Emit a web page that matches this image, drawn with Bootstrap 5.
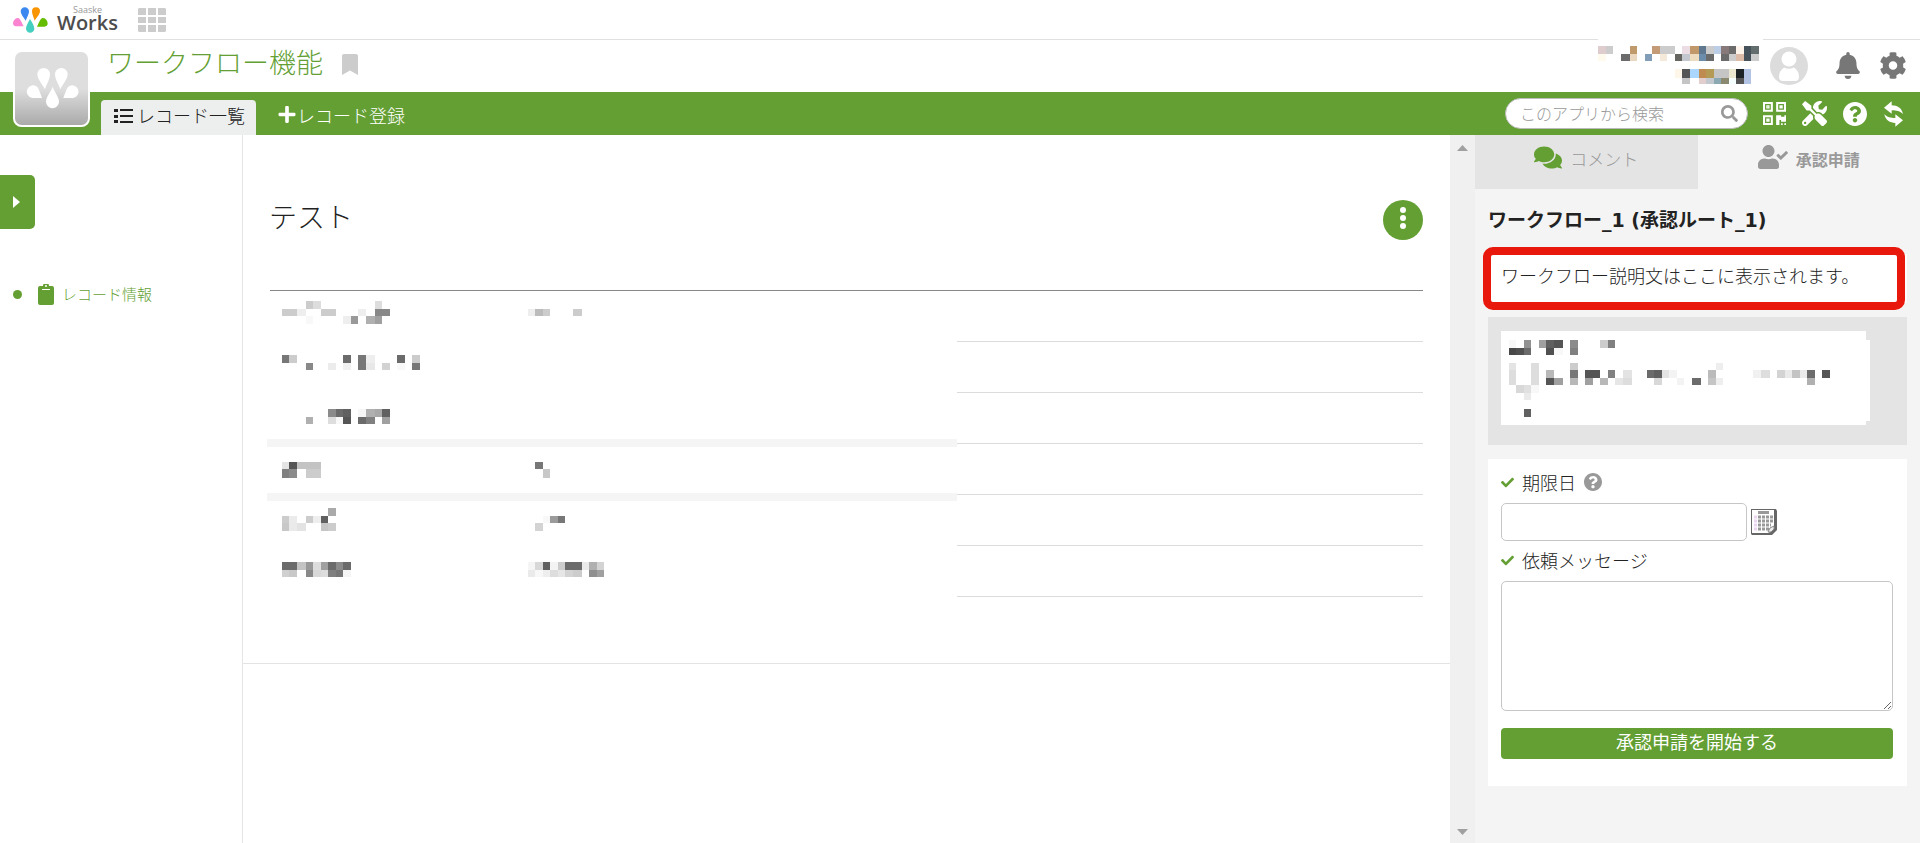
<!DOCTYPE html>
<html lang="ja">
<head>
<meta charset="utf-8">
<meta name="viewport" content="width=device-width, initial-scale=1">
<title>ワークフロー機能</title>
<link href="https://cdn.jsdelivr.net/npm/bootstrap@5.3.0/dist/css/bootstrap.min.css" rel="stylesheet">
<style>
:root { --leaf: #649f34; --ink: #222; }
body { font-family: "Noto Sans CJK JP", sans-serif; font-weight: 300; font-size: 18px; line-height: 24px; color: var(--ink); background: #fff; }
svg { display: block; fill: currentColor; flex: none; }
a { color: inherit; text-decoration: none; }
.topbar { height: 40px; border-bottom: 1px solid #e0e0e0; padding-left: 12px; }
.brand-name { font-family: "Open Sans", sans-serif; font-weight: 600; font-size: 20px; line-height: 20px; color: #4d4d4d; }
.brand-top { font-family: "Open Sans", sans-serif; font-weight: 400; font-size: 9px; line-height: 6px; color: #999; }
.apps-btn { color: #ccc; margin-left: 20px; }
.apphead { height: 52px; padding-left: 107px; padding-right: 14px; color: #777; }
.apphead h1 { font-size: 27px; font-weight: 300; line-height: 32px; color: var(--leaf); margin-top: 6px; }
.bookmark { color: #ccc; margin: 14px 0 0 19px; }
.app-icon { position: absolute; left: 13px; top: 10px; z-index: 2; }
.redacted-user { margin-top: -2px; z-index: 1; }
.user-tools { padding: 0 0 2px 5px; }
.greenbar { background: var(--leaf); height: 43px; padding-left: 101px; padding-right: 16px; color: #fff; }
.app-tab { height: 35px; padding: 0 11px 6px 13px; border-radius: 4px 4px 0 0; color: #fff; font-size: 18px; }
.app-tab.active { background: #edeeee; color: var(--ink); }
.searchbox { width: 243px; height: 31px; border-radius: 16px; background: #fff; border: 1px solid #bbb; padding: 0 9px 0 14px; color: #999; margin-right: 15px; }
.searchbox input { font-size: 16px; font-weight: 300; line-height: 24px; width: 100%; min-width: 0; border: 0; outline: 0; padding: 0 0 2px; background: none; }
.searchbox input::placeholder { color: #999; opacity: 1; }
.side { width: 243px; border-right: 1px solid #e5e5e5; padding-top: 40px; color: var(--leaf); font-size: 15px; }
.drawer { width: 35px; height: 54px; border-radius: 0 5px 5px 0; background: var(--leaf); color: #fff; padding: 0 0 0 13px; }
.drawer:hover { background: var(--leaf); }
.side nav { margin-top: 53px; padding-left: 13px; }
.dot { width: 9px; height: 9px; border-radius: 50%; background: var(--leaf); margin-right: 16px; }
.record { border-bottom: 1px solid #e3e3e3; padding: 65px 27px 66px 26px; }
.record h2 { font-size: 28px; font-weight: 300; line-height: 32px; }
.more { width: 40px; height: 40px; border-radius: 50%; background: var(--leaf); color: #fff; }
.fields { border-top: 1px solid #888; margin: 50px 0 0 1px; }
.fields table { margin-top: -1px; }
.fields tr { height: 51px; }
.fields td { border-bottom: 1px solid #dcdcdc; }
.redacted-fields { position: absolute; left: -3px; top: 1px; background: #fff; }
.track { width: 25px; background: #f0f0f0; color: #a0a0a0; padding: 10px 0 8px; }
.panel { width: 445px; background: #f4f4f4; }
.panel-tab { height: 54px; padding-bottom: 6px; font-size: 17px; color: #999; }
.panel-tab.off { background: #e4e4e4; }
.panel-tab.on { font-size: 16px; font-weight: 700; }
.panel-body { padding: 0 13px; }
.panel h3 { font-family: "DejaVu Sans", "Noto Sans CJK JP", sans-serif; font-size: 19px; font-weight: 700; line-height: 24px; margin: 19px 0 22px; }
.note { height: 49px; padding: 9px 13px; }
.note::after { content: ""; position: absolute; inset: -7px 2px -7px -5px; border: 8px solid #e8190c; border-radius: 10px; }
.history { background: #e4e4e4; padding: 14px 13px 20px; margin: 14px 0; }
.request { padding: 11px 14px 27px 13px; }
.request .label-row { margin-bottom: 9px; }
.request .date-row { margin-bottom: 7px; }
.field { border: 1px solid #c6c6c6; border-radius: 5px; font-size: 18px; background: #fff; outline: 0; }
.date { width: 246px; height: 38px; }
.message { height: 130px; resize: both; }
.start { height: 31px; background: var(--leaf); color: #fff; border-radius: 4px; font-size: 18px; font-weight: 400; line-height: 24px; padding: 0 0 6px; margin-top: 17px; border: 0; }
</style>
</head>
<body class="min-vh-100 d-flex flex-column">
<header>
  <div class="topbar d-flex align-items-center">
    <a href="#" class="d-flex align-items-center gap-1" aria-label="Saaske Works">
      <svg width="37" height="28" viewBox="36 18 111 84">
        <path fill="#3b89f0" d="M77 62C70 52 62 42 62 34A12 12 0 0 1 87 34C87 43 81 52 77 62"/>
        <path fill="#f99500" d="M104 62C101 52 96 43 96 34A12 12 0 0 1 120 34C120 42 111 52 104 62"/>
        <path fill="#45cfc0" d="M90 57C95 66 103 77 103 86A12.500 12.500 0 0 1 78 86C78 77 86 66 90 57"/>
        <path fill="#fa84d0" d="M71 79H48A10 10 0 0 1 39 69C40 60 47 54 54 54C60 54 64 65 71 79"/>
        <path fill="#66bd00" d="M111 80H133A10 10 0 0 0 143 70C142 60 136 54 128 54C122 54 118 66 111 80"/>
      </svg>
      <span class="d-flex flex-column align-items-center ps-1"><span class="brand-top">Saaske</span><span class="brand-name">Works</span></span>
    </a>
    <button type="button" class="btn p-0 border-0 apps-btn" aria-label="アプリ一覧">
      <svg width="28" height="24" viewBox="0 0 28 24"><path d="M1 0h7v7H0V1zM10 0h8v7h-8zM20 0h7l1 1v6h-8zM0 9h8v6H0zM10 9h8v6h-8zM20 9h8v6h-8zM0 17h8v7H1l-1-1zM10 17h8v7h-8zM20 17h8v6l-1 1h-7z"/></svg>
    </button>
  </div>
  <div class="position-relative">
    <svg class="app-icon" width="77" height="77" viewBox="39 150 231 231">
      <defs><linearGradient id="fade" x1="0" y1="0" x2="0" y2="1"><stop offset="0.500" stop-color="#dedede"/><stop offset="1" stop-color="#aaa"/></linearGradient></defs>
      <rect x="39" y="150" width="231" height="231" rx="26" fill="#fff"/>
      <rect x="45" y="156" width="219" height="219" rx="20" fill="url(#fade)"/>
      <path fill="#fff" d="M135 268C123 248 112 236 112 223A19 19 0 0 1 150 223C150 238 141 250 135 268M181 268C175 250 165 238 165 223A19 19 0 0 1 203 223C203 236 192 248 181 268M158 260C164 278 177 290 177 305A19 19 0 0 1 138 305C138 290 151 278 158 260M126 294H97A19 19 0 1 1 112 261C118 270 121 281 126 294M190 294H219A19 19 0 1 0 204 261C198 270 195 281 190 294"/>
    </svg>
    <div class="apphead d-flex align-items-start">
      <h1 class="mb-0">ワークフロー機能</h1>
      <button type="button" class="btn p-0 border-0 bookmark" aria-label="ブックマーク"><svg width="16" height="21" viewBox="0 0 384 512" preserveAspectRatio="none"><path d="M0 512V48C0 21.490 21.490 0 48 0h288c26.510 0 48 21.490 48 48v464L192 400 0 512z"/></svg></button>
      <svg class="redacted-user position-relative ms-auto" width="165" height="50" viewBox="360 114 495 150" shape-rendering="crispEdges"><rect x="360" y="114" width="495" height="150" fill="#fff"/><g data-cells="360 138 24 24 deccce;384 138 21 24 ccc;456 138 21 24 c09a6b;522 138 24 24 c39b77;546 138 45 24 ccc;612 138 24 24 ecdce4;636 138 27 24 c0986a;663 138 21 24 60788f;684 138 24 24 ccc;708 138 21 24 bccde6;729 138 24 24 877879;753 138 21 24 6b6b6b;774 138 24 24 fff4ec;798 138 21 45 45525c;819 138 24 24 636d6d;360 162 24 21 fffaee;429 162 27 21 6b6b6b;456 162 21 21 ead9c0;501 162 21 21 819db8;546 162 21 21 f5ead9;591 162 21 21 666560;612 162 24 21 c3c8cf;636 162 27 21 eddcc0;663 162 21 21 6b8cab;684 162 24 21 6b6b6b;729 162 24 21 6b6b6b;753 162 21 21 ccc;774 162 24 21 dcbca9;819 162 24 21 ccc;591 207 21 27 fff6ea;612 207 24 27 555;636 207 27 27 abd7ff;663 207 21 27 c08b50;684 207 24 27 b39a55;708 207 45 27 c5c5c5;753 207 21 27 e9e7d0;774 207 24 27 1c2326;798 207 21 45 b3c3e3;612 234 24 18 c5c5c5;663 234 21 18 e2cfcd;684 234 24 18 c3c8cf;708 234 21 18 8ba8b3;729 234 24 18 8b8a70;753 234 21 18 f5ffff;774 234 24 18 555"/></svg>
      <div class="user-tools d-flex align-items-center align-self-stretch">
        <button type="button" class="btn p-0 border-0" aria-label="ユーザー"><svg width="40" height="40" viewBox="0 0 40 40"><circle cx="21" cy="21" r="19" fill="#dcdcdc"/><circle cx="21" cy="14" r="7.500" fill="#fff"/><path fill="#fff" d="M16 22.500Q21 25 26 22.500Q31 26 31 32Q31 36 27 36H15Q11 36 11 32Q11 26 16 22.500"/></svg></button>
        <button type="button" class="btn p-0 border-0 ms-4 ps-1" style="color:#777" aria-label="通知"><svg width="24" height="27" viewBox="0 0 448 512"><path d="M224 512c35.320 0 63.970-28.650 63.970-64H160.030c0 35.350 28.650 64 63.970 64zm215.390-149.710c-19.320-20.760-55.470-51.990-55.470-154.290 0-77.700-54.480-139.900-127.940-155.160V32c0-17.670-14.320-32-31.980-32s-31.980 14.330-31.980 32v20.840C118.560 68.100 64.080 130.300 64.080 208c0 102.300-36.150 133.530-55.470 154.290-6 6.450-8.660 14.160-8.610 21.710.11 16.400 12.980 32 32.100 32h383.800c19.120 0 32-15.600 32.100-32 .05-7.550-2.610-15.270-8.610-21.710z"/></svg></button>
        <button type="button" class="btn p-0 border-0 ms-3 ps-1" style="color:#777" aria-label="設定"><svg width="26" height="27" viewBox="12 5 488 502"><path d="M487.400 315.700l-42.600-24.600c4.300-23.200 4.300-47 0-70.200l42.600-24.600c4.900-2.800 7.100-8.600 5.500-14-11.100-35.600-30-67.800-54.700-94.600-3.800-4.100-10-5.100-14.800-2.300L380.800 110c-17.900-15.400-38.500-27.300-60.800-35.100V25.800c0-5.600-3.900-10.500-9.400-11.700-36.700-8.200-74.300-7.800-109.200 0-5.500 1.200-9.400 6.100-9.400 11.700V75c-22.200 7.900-42.800 19.800-60.800 35.100L88.700 85.500c-4.900-2.800-11-1.900-14.800 2.300-24.700 26.700-43.600 58.900-54.700 94.600-1.700 5.400.6 11.200 5.500 14L67.300 221c-4.300 23.200-4.300 47 0 70.200l-42.600 24.600c-4.900 2.800-7.100 8.600-5.500 14 11.100 35.600 30 67.800 54.700 94.600 3.800 4.100 10 5.100 14.800 2.300l42.600-24.600c17.900 15.400 38.500 27.300 60.800 35.100v49.200c0 5.600 3.900 10.500 9.400 11.700 36.700 8.200 74.300 7.800 109.200 0 5.500-1.200 9.400-6.100 9.400-11.700v-49.200c22.200-7.900 42.800-19.800 60.800-35.100l42.600 24.600c4.900 2.800 11 1.900 14.800-2.300 24.700-26.700 43.600-58.900 54.700-94.600 1.500-5.500-.7-11.300-5.600-14.100zM256 336c-44.100 0-80-35.900-80-80s35.900-80 80-80 80 35.900 80 80-35.900 80-80 80z"/></svg></button>
      </div>
    </div>
    <div class="greenbar d-flex align-items-center">
      <nav class="d-flex align-self-end gap-2">
        <a href="#" class="app-tab active d-flex align-items-center gap-1"><svg width="19" height="16" viewBox="0 -1 19 16"><path d="M0 1h4v3H0zM0 7h4v3H0zM0 12h4v3H0zM6 1h13v2H6zM6 7h13v2H6zM6 13h13v2H6z"/></svg>レコード一覧</a>
        <a href="#" class="app-tab d-flex align-items-center"><svg width="20" height="17" viewBox="-16 32 480 448"><path d="M416 208H272V64c0-17.670-14.330-32-32-32h-32c-17.670 0-32 14.330-32 32v144H32c-17.670 0-32 14.330-32 32v32c0 17.670 14.330 32 32 32h144v144c0 17.670 14.330 32 32 32h32c17.670 0 32-14.330 32-32V304h144c17.670 0 32-14.330 32-32v-32c0-17.670-14.330-32-32-32z"/></svg>レコード登録</a>
      </nav>
      <form class="searchbox d-flex align-items-center ms-auto">
        <input type="text" aria-label="検索" placeholder="このアプリから検索">
        <button type="button" class="btn p-0 border-0" style="color:#999" aria-label="検索"><svg width="17" height="17" viewBox="0 0 512 512"><path d="M505 442.700L405.300 343c-4.500-4.500-10.600-7-17-7H372c27.600-35.300 44-79.700 44-128C416 93.100 322.900 0 208 0S0 93.100 0 208s93.100 208 208 208c48.300 0 92.700-16.400 128-44v16.300c0 6.400 2.500 12.500 7 17l99.700 99.700c9.400 9.400 24.600 9.400 33.900 0l28.300-28.300c9.400-9.400 9.400-24.600.1-34zM208 336a128 128 0 1 1 0-256a128 128 0 1 1 0 256z"/></svg></button>
      </form>
      <div class="d-flex align-items-center gap-3">
        <a href="#" aria-label="QRコード"><svg width="23" height="23" viewBox="0 32 448 448"><path d="M0 224h192V32H0v192zM40 72h112v112H40zM64 96h64v64H64zM88 120v16h16v-16zM256 32v192h192V32zM296 72h112v112H296zM320 96h64v64h-64zM0 480h192V288H0zM40 328h112v112H40zM64 352h64v64H64zM416 288h32v128h-96v-32h-32v96h-64V288h96v32h64v-32zm0 160h32v32h-32v-32zm-64 0h32v32h-32v-32z" fill-rule="evenodd"/></svg></a>
        <a href="#" aria-label="ツール"><svg width="25" height="25" viewBox="0 0 512 512"><path d="M501.100 395.700L384 278.600c-23.100-23.100-57.600-27.600-85.400-13.900L192 158.100V96L64 0 0 64l96 128h62.100l106.600 106.600c-13.600 27.800-9.200 62.300 13.900 85.400l117.100 117.100c14.600 14.600 38.200 14.600 52.700 0l52.700-52.700c14.500-14.600 14.500-38.200 0-52.700zM331.700 225c28.300 0 54.900 11 74.900 31l19.400 19.400c15.800-6.900 30.800-16.500 43.800-29.500 37.100-37.100 49.700-89.300 37.900-136.700-2.200-9-13.500-12.100-20.100-5.500l-74.400 74.400-67.900-11.300L334 98.900l74.400-74.400c6.600-6.600 3.400-17.900-5.700-20.200-47.400-11.700-99.600.9-136.600 37.900-28.500 28.500-41.900 66.100-41.200 103.600l82.100 82.100c8.100-1.900 16.500-2.900 24.700-2.900zm-103.900 82l-56.700-56.700L18.700 402.800c-25 25-25 65.500 0 90.500s65.500 25 90.500 0l123.600-123.600c-7.600-19.900-9.900-41.600-5-62.700zM64 472c-13.200 0-24-10.800-24-24 0-13.300 10.700-24 24-24s24 10.700 24 24c0 13.200-10.700 24-24 24z"/></svg></a>
        <a href="#" aria-label="ヘルプ"><svg width="24" height="24" viewBox="8 8 496 496"><path id="help" d="M504 256c0 136.997-111.043 248-248 248S8 392.997 8 256C8 119.083 119.043 8 256 8s248 111.083 248 248zM262.655 90c-54.497 0-89.255 22.957-116.549 63.758-3.536 5.286-2.353 12.415 2.715 16.258l34.699 26.310c5.205 3.947 12.621 3.008 16.665-2.122 17.864-22.658 30.113-35.797 57.303-35.797 20.429 0 45.698 13.148 45.698 32.958 0 14.976-12.363 22.667-32.534 33.976C247.128 238.528 216 254.941 216 296v4c0 6.627 5.373 12 12 12h56c6.627 0 12-5.373 12-12v-1.333c0-28.462 83.186-29.647 83.186-106.667 0-58.002-60.165-102-116.531-102zM256 338c-25.365 0-46 20.635-46 46 0 25.364 20.635 46 46 46s46-20.636 46-46c0-25.364-20.635-46-46-46z"/></svg></a>
        <a href="#" aria-label="更新"><svg width="21" height="26" viewBox="429 182 63 78"><path d="M432 202L455 183V195C472 195 486 203 489 222C480 212 470 210 455 210V220ZM489 240L466 259V248C450 247 436 240 433 221C441 231 452 233 466 233V222Z"/></svg></a>
      </div>
    </div>
  </div>
</header>

<div class="d-flex flex-grow-1">
  <aside class="side flex-shrink-0">
    <button type="button" class="btn drawer border-0 d-flex align-items-center" aria-label="メニューを開く"><svg width="7" height="12" viewBox="0 0 7 12"><path d="M0 0l7 6-7 6z"/></svg></button>
    <nav><a href="#" class="d-flex align-items-center"><span class="dot"></span><svg class="me-2" width="16" height="21" viewBox="0 0 16 21"><path fill-rule="evenodd" d="M2 2H5A3 3 0 0 1 11 2H14Q16 2 16 4V19Q16 21 14 21H2Q0 21 0 19V4Q0 2 2 2M8 1A1 1 0 0 0 8 3A1 1 0 0 0 8 1M4 5V6H12V5Z"/></svg>レコード情報</a></nav>
  </aside>

  <main class="flex-grow-1">
    <section class="record">
      <div class="d-flex justify-content-between align-items-start">
        <h2 class="mb-0">テスト</h2>
        <button type="button" class="btn more p-0 border-0" aria-label="操作メニュー"><svg class="mx-auto mb-1" width="6" height="22" viewBox="0 0 6 22"><circle cx="3" cy="3" r="3"/><circle cx="3" cy="11" r="3"/><circle cx="3" cy="19" r="3"/></svg></button>
      </div>
      <div class="fields position-relative">
        <table class="w-100"><tbody>
          <tr><td></td><td></td></tr><tr><td></td><td></td></tr><tr><td></td><td></td></tr>
          <tr><td></td><td></td></tr><tr><td></td><td></td></tr><tr><td></td><td></td></tr>
        </tbody></table>
        <svg class="redacted-fields" width="690" height="306" viewBox="81 336 2070 918" shape-rendering="crispEdges">
          <g data-cells="198 363 21 24 ccc;219 363 24 24 ddd;405 363 21 24 ddd;126 387 45 21 ccc;171 387 27 21 eee;243 387 45 21 ccc;354 387 24 21 eee;405 387 45 21 888;198 408 21 24 f8f8f8;309 408 24 24 eee;333 408 21 24 999;378 408 27 24 b0b0b0;405 408 21 24 a0a0a0;864 387 21 21 eee;885 387 24 21 bbb;909 387 21 21 ccc;999 387 27 21 ccc;126 525 21 24 777;147 525 24 24 ccc;309 525 24 24 6b6b6b;354 525 24 45 777;378 525 27 24 eee;471 525 24 24 6b6b6b;516 525 24 24 ccc;198 549 21 21 888;264 549 24 21 ececec;309 549 24 21 f0f0f0;378 549 27 21 e8e8e8;426 549 24 21 d2d2d2;471 549 24 21 f8f8f8;516 549 24 21 777"/>
          <g transform="translate(0 630)" data-cells="81 147 2070 24 f5f5f5;81 309 2070 24 f5f5f5;198 81 21 21 b0b0b0;264 57 24 24 8b8b8b;288 57 21 24 6b6b6b;309 57 24 24 606060;264 81 24 21 ddd;288 81 21 21 f8f8f8;309 81 24 21 555;354 57 24 24 f6f6f6;378 57 27 24 b0b0b0;405 57 21 24 a8a8a8;426 57 24 24 606060;354 81 24 21 6b6b6b;378 81 27 21 808080;426 81 24 21 a0a0a0;126 216 21 21 e4e4e4;147 216 24 21 555;171 216 72 21 c3c3c3;126 237 21 27 808080;147 237 24 27 8b8b8b;198 237 45 27 ccc;885 216 24 21 777;909 237 21 27 c8c8c8;264 354 24 24 aaa;126 378 21 21 ccc;147 378 24 21 ebebeb;198 378 21 21 ccc;219 378 24 21 eee;243 378 21 21 606060;126 399 21 24 c8c8c8;147 399 24 24 eaeaea;171 399 27 24 e3e3e3;243 399 21 24 c5c5c5;264 399 24 24 ccc;885 399 24 24 d3d3d3;909 378 21 21 f8f8f8;930 378 24 21 9b9b9b;954 378 21 21 777;126 516 45 24 6b6b6b;171 516 27 24 c3c3c3;198 516 21 24 989898;219 516 24 24 ddd;243 516 21 24 a0a0a0;264 516 24 24 6b6b6b;288 516 21 24 8b8b8b;309 516 24 24 6b6b6b;126 540 21 21 d0d0d0;147 540 24 21 c8c8c8;198 540 21 21 888;219 540 24 21 d8d8d8;243 540 21 21 ddd;264 540 24 21 808080;288 540 21 21 777;309 540 24 21 f5f5f5;864 516 21 24 f5f5f5;885 516 24 24 d8d8d8;909 516 21 24 606060;930 516 24 24 f3f3f3;954 516 21 24 ccc;975 516 51 24 6b6b6b;1026 516 21 24 eaeaea;1047 516 24 24 b0b0b0;1071 516 21 24 d3d3d3;864 540 21 21 eaeaea;885 540 24 21 f8f8f8;909 540 21 21 eee;930 540 24 21 ddd;954 540 21 21 e6e6e6;975 540 24 21 d3d3d3;999 540 27 21 ccc;1047 540 24 21 8f8f8f;1071 540 21 21 a0a0a0"/>
        </svg>
      </div>
    </section>
  </main>

  <div class="track flex-shrink-0 d-flex flex-column justify-content-between align-items-center">
    <svg width="11" height="6" viewBox="0 0 11 6"><path d="M5.500 0L11 6H0z"/></svg>
    <svg width="11" height="6" viewBox="0 0 11 6"><path d="M5.500 6L11 0H0z"/></svg>
  </div>

  <aside class="panel flex-shrink-0">
    <div class="d-flex">
      <a href="#" class="panel-tab off w-50 d-flex align-items-center justify-content-center"><svg class="me-2 mb-1" style="color:var(--leaf)" width="28" height="25" viewBox="0 0 576 512"><path d="M416 192c0-88.400-93.100-160-208-160S0 103.600 0 192c0 34.300 14.100 65.900 38 92-13.400 30.200-35.500 54.200-35.800 54.500-2.200 2.300-2.800 5.700-1.500 8.700S4.800 352 8 352c36.600 0 66.900-12.300 88.700-25 32.200 15.700 70.300 25 111.300 25 114.900 0 208-71.600 208-160zm122 220c23.900-26 38-57.700 38-92 0-66.900-53.500-124.200-129.300-148.100.9 6.600 1.300 13.300 1.300 20.100 0 105.900-107.700 192-240 192-10.800 0-21.300-.8-31.700-1.900C207.800 439.600 281.800 480 368 480c41 0 79.100-9.200 111.300-25 21.800 12.700 52.100 25 88.700 25 3.200 0 6.100-1.900 7.300-4.800 1.300-2.900.7-6.300-1.500-8.700-.3-.3-22.400-24.200-35.800-54.500z"/></svg>コメント</a>
      <a href="#" class="panel-tab on w-50 d-flex align-items-center justify-content-center"><svg class="me-2 mb-1" width="30" height="24" viewBox="0 0 640 512"><path d="M224 256c70.700 0 128-57.300 128-128S294.700 0 224 0 96 57.300 96 128s57.300 128 128 128zm89.600 32h-16.700c-22.200 10.200-46.900 16-72.900 16s-50.600-5.800-72.900-16h-16.700C60.200 288 0 348.200 0 422.400V464c0 26.500 21.500 48 48 48h352c26.500 0 48-21.500 48-48v-41.600c0-74.200-60.200-134.400-134.400-134.400zm323-128.400l-27.800-28.100c-4.600-4.700-12.100-4.700-16.800-.1l-104.800 104-45.500-45.800c-4.600-4.700-12.100-4.700-16.800-.1l-28.100 27.900c-4.700 4.600-4.700 12.100-.1 16.800l81.700 82.300c4.600 4.700 12.100 4.700 16.800.1l141.300-140.200c4.600-4.700 4.700-12.200.1-16.800z"/></svg>承認申請</a>
    </div>
    <div class="panel-body">
      <h3>ワークフロー_1 (承認ルート_1)</h3>
      <div class="note bg-white position-relative">ワークフロー説明文はここに表示されます。</div>
      <div class="history">
        <svg width="369" height="94" viewBox="183 393 1107 282" shape-rendering="crispEdges"><path fill="#fff" d="M183 393H1278V420H1290V663H1278V675H183Z"/><g data-cells="207 420 21 24 f8f8f8;252 420 21 24 929292;297 420 21 24 a0a0a0;318 420 24 24 606060;342 420 27 24 555;390 420 24 24 8b8b8b;480 420 24 24 ccc;504 420 21 24 808080;207 444 21 21 484848;228 444 24 21 505050;252 444 21 21 6b6b6b;318 444 24 21 505050;342 444 27 21 f8f8f8;390 444 24 21 808080;207 489 21 21 e4e4e4;273 489 24 66 ddd;390 489 24 21 ccc;828 489 21 21 eee;207 510 21 45 ddd;318 510 24 24 b8b8b8;390 510 24 24 777;435 510 45 24 555;504 510 21 24 808080;549 510 27 24 e3e3e3;621 510 21 24 6b6b6b;642 510 24 24 606060;666 510 21 24 e3e3e3;687 510 24 24 f3f3f3;804 510 24 24 bbb;939 510 24 24 f1f1f1;963 510 27 24 ddd;1011 510 24 24 d3d3d3;1035 510 21 24 eaeaea;1056 510 24 24 c3c3c3;1080 510 21 24 eaeaea;1101 510 24 24 6b6b6b;1146 510 24 24 555;318 534 24 21 555;342 534 27 21 a0a0a0;390 534 24 21 b8b8b8;435 534 24 21 a0a0a0;480 534 24 21 b8b8b8;525 534 24 21 e6e6e6;549 534 27 21 ddd;642 534 24 21 d8d8d8;711 534 21 21 f3f3f3;756 534 27 21 6b6b6b;804 534 24 21 c5c5c5;828 534 21 21 eee;1101 534 24 21 b0b0b0;228 555 24 24 d8d8d8;252 555 21 24 e0e0e0;273 555 24 24 f8f8f8;252 579 21 21 eaeaea;252 627 21 24 606060"/></svg>
      </div>
      <form class="request bg-white">
        <div class="label-row d-flex align-items-center">
          <svg class="me-2" style="color:var(--leaf)" width="13" height="13" viewBox="0 0 512 512"><path id="tick" d="M173.898 439.404l-166.400-166.400c-9.997-9.997-9.997-26.206 0-36.204l36.203-36.204c9.997-9.998 26.207-9.998 36.204 0L192 312.690 432.095 72.596c9.997-9.997 26.207-9.997 36.204 0l36.203 36.204c9.997 9.997 9.997 26.206 0 36.204l-294.400 294.401c-9.998 9.997-26.207 9.997-36.204-.001z"/></svg>
          <label for="due">期限日</label>
          <button type="button" class="btn p-0 border-0 ms-2" style="color:#999" aria-label="ヘルプ"><svg width="18" height="18" viewBox="8 8 496 496"><use href="#help"/></svg></button>
        </div>
        <div class="date-row d-flex align-items-center gap-1">
          <input id="due" type="text" class="field date">
          <button type="button" class="btn p-0 border-0" aria-label="カレンダー"><svg width="26" height="26" viewBox="0 0 26 26"><path fill="#666" d="M0 0h25l1 2v19l-5 5H1l-1-1z"/><path fill="#fff" d="M1 1h22v16l-5 7H1z"/><path fill="#999" d="M7 2h11v3H7z"/><path stroke="#999" stroke-width="3" stroke-dasharray="3 1" d="M7 8h15M7 12h15M7 16h13M7 20h11"/><path stroke="#ecd5f0" stroke-width="3" d="M3 8h3M3 12h3M3 16h3M3 20h3"/><path fill="#eee" stroke="#888" d="M17 23l2-4 4-2v3l-3 3z"/></svg></button>
        </div>
        <div class="label-row d-flex align-items-center">
          <svg class="me-2" style="color:var(--leaf)" width="13" height="13" viewBox="0 0 512 512"><use href="#tick"/></svg>
          <label for="msg">依頼メッセージ</label>
        </div>
        <textarea id="msg" class="field message w-100 d-block"></textarea>
        <button type="button" class="btn start w-100">承認申請を開始する</button>
      </form>
    </div>
  </aside>
</div>

<script src="https://cdn.jsdelivr.net/npm/bootstrap@5.3.0/dist/js/bootstrap.bundle.min.js"></script>
<script>
// Paints the masking mosaics: every cell is "x y width height colour".
document.querySelectorAll('[data-cells]').forEach(function (group) {
  group.dataset.cells.split(';').forEach(function (cell) {
    var v = cell.split(' ');
    var r = document.createElementNS('http://www.w3.org/2000/svg', 'rect');
    r.setAttribute('x', v[0]);
    r.setAttribute('y', v[1]);
    r.setAttribute('width', v[2]);
    r.setAttribute('height', v[3]);
    r.setAttribute('fill', '#' + v[4]);
    group.appendChild(r);
  });
});
</script>
</body>
</html>
